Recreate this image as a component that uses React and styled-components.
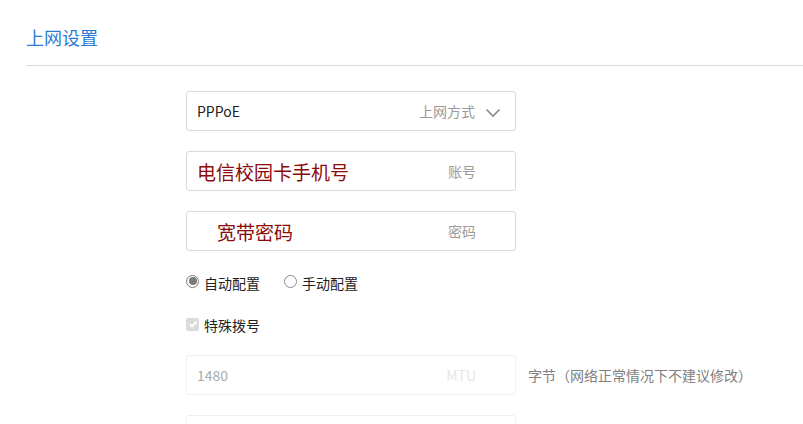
import React from "react";
import styled, { createGlobalStyle } from "styled-components";

const Global = createGlobalStyle`
  html, body { margin: 0; padding: 0; background: #fff; }
  body { font-family: "Noto Sans CJK SC", "Noto Sans", sans-serif; }
`;

const Page = styled.div`
  width: 803px;
  height: 424px;
  overflow: hidden;
  padding-left: 26px;
  box-sizing: border-box;
`;

const Header = styled.div`
  height: 66px;
  border-bottom: 1px solid #d9d9d9;
  display: flex;
  align-items: center;
  padding-top: 8px;
  box-sizing: border-box;
  margin-right: -30px;
`;

const Title = styled.h2`
  margin: 0;
  font-size: 18px;
  font-weight: normal;
  color: #2b7cd3;
  line-height: 1;
`;

const Form = styled.div`
  margin-left: 160px;
  padding-top: 25px;
  display: flex;
  flex-direction: column;
`;

const FieldRow = styled.div`
  display: flex;
  align-items: center;
  gap: 12px;
  margin-top: ${(p) => p.$mt || 0}px;
`;

const Field = styled.div`
  width: 330px;
  height: 40px;
  box-sizing: border-box;
  border: 1px solid ${(p) => (p.$faint ? "#f0f0f0" : "#d9d9d9")};
  border-radius: 3px;
  display: flex;
  align-items: center;
  padding: 0 ${(p) => (p.$select ? 14 : 39)}px 0 ${(p) => p.$indent || 10}px;
`;

const Value = styled.span`
  flex: 1;
  font-size: ${(p) => (p.$big ? 19 : 14)}px;
  color: ${(p) => p.$color || "#222"};
  white-space: nowrap;
`;

const Label = styled.span`
  font-size: 14px;
  color: ${(p) => p.$color || "#9a9a9a"};
`;

const Chevron = styled.svg`
  margin-left: 10px;
  margin-top: 3px;
  width: 16px;
  height: 10px;
`;

const Hint = styled.span`
  font-size: 14px;
  color: #808080;
`;

const OptionRow = styled.div`
  display: flex;
  align-items: center;
  height: 20px;
  margin-top: 22px;
  gap: 24px;
`;

const Option = styled.label`
  display: flex;
  align-items: center;
  gap: 5px;
  font-size: 14px;
  color: #222;
`;

const Radio = styled.span`
  width: 13px;
  height: 13px;
  box-sizing: border-box;
  border-radius: 50%;
  border: 1px solid ${(p) => (p.$on ? "#7a7a7a" : "#8a8a8a")};
  background: #fff;
  display: flex;
  align-items: center;
  justify-content: center;
  margin-top: -4px;
  &::after {
    content: "";
    width: 8px;
    height: 8px;
    border-radius: 50%;
    background: ${(p) => (p.$on ? "#7a7a7a" : "transparent")};
  }
`;

const Check = styled.span`
  width: 13px;
  height: 13px;
  border-radius: 2px;
  background: #dcdcdc;
  display: flex;
  align-items: center;
  justify-content: center;
  margin-top: -2px;
`;

export default function App() {
  return (
    <>
      <Global />
      <Page>
        <Header>
          <Title>上网设置</Title>
        </Header>
        <Form>
          <FieldRow>
            <Field $select>
              <Value>PPPoE</Value>
              <Label>上网方式</Label>
              <Chevron viewBox="0 0 16 10">
                <path d="M1.5 1.5 L8 8 L14.5 1.5" fill="none" stroke="#8a8a8a" strokeWidth="1.6" />
              </Chevron>
            </Field>
          </FieldRow>
          <FieldRow $mt={20}>
            <Field>
              <Value $big $color="#8b0a0a">电信校园卡手机号</Value>
              <Label>账号</Label>
            </Field>
          </FieldRow>
          <FieldRow $mt={20}>
            <Field $indent={30}>
              <Value $big $color="#8b0a0a">宽带密码</Value>
              <Label>密码</Label>
            </Field>
          </FieldRow>
          <OptionRow>
            <Option>
              <Radio $on />
              自动配置
            </Option>
            <Option>
              <Radio />
              手动配置
            </Option>
          </OptionRow>
          <OptionRow>
            <Option>
              <Check>
                <svg width="10" height="10" viewBox="0 0 10 10">
                  <path d="M1.8 5.2 L4 7.4 L8.4 2.6" fill="none" stroke="#fff" strokeWidth="1.8" />
                </svg>
              </Check>
              特殊拨号
            </Option>
          </OptionRow>
          <FieldRow $mt={20}>
            <Field $faint>
              <Value $color="#aaaaaa">1480</Value>
              <Label $color="#e6e6e6">MTU</Label>
            </Field>
            <Hint>字节（网络正常情况下不建议修改）</Hint>
          </FieldRow>
          <FieldRow $mt={20}>
            <Field $faint />
          </FieldRow>
        </Form>
      </Page>
    </>
  );
}
